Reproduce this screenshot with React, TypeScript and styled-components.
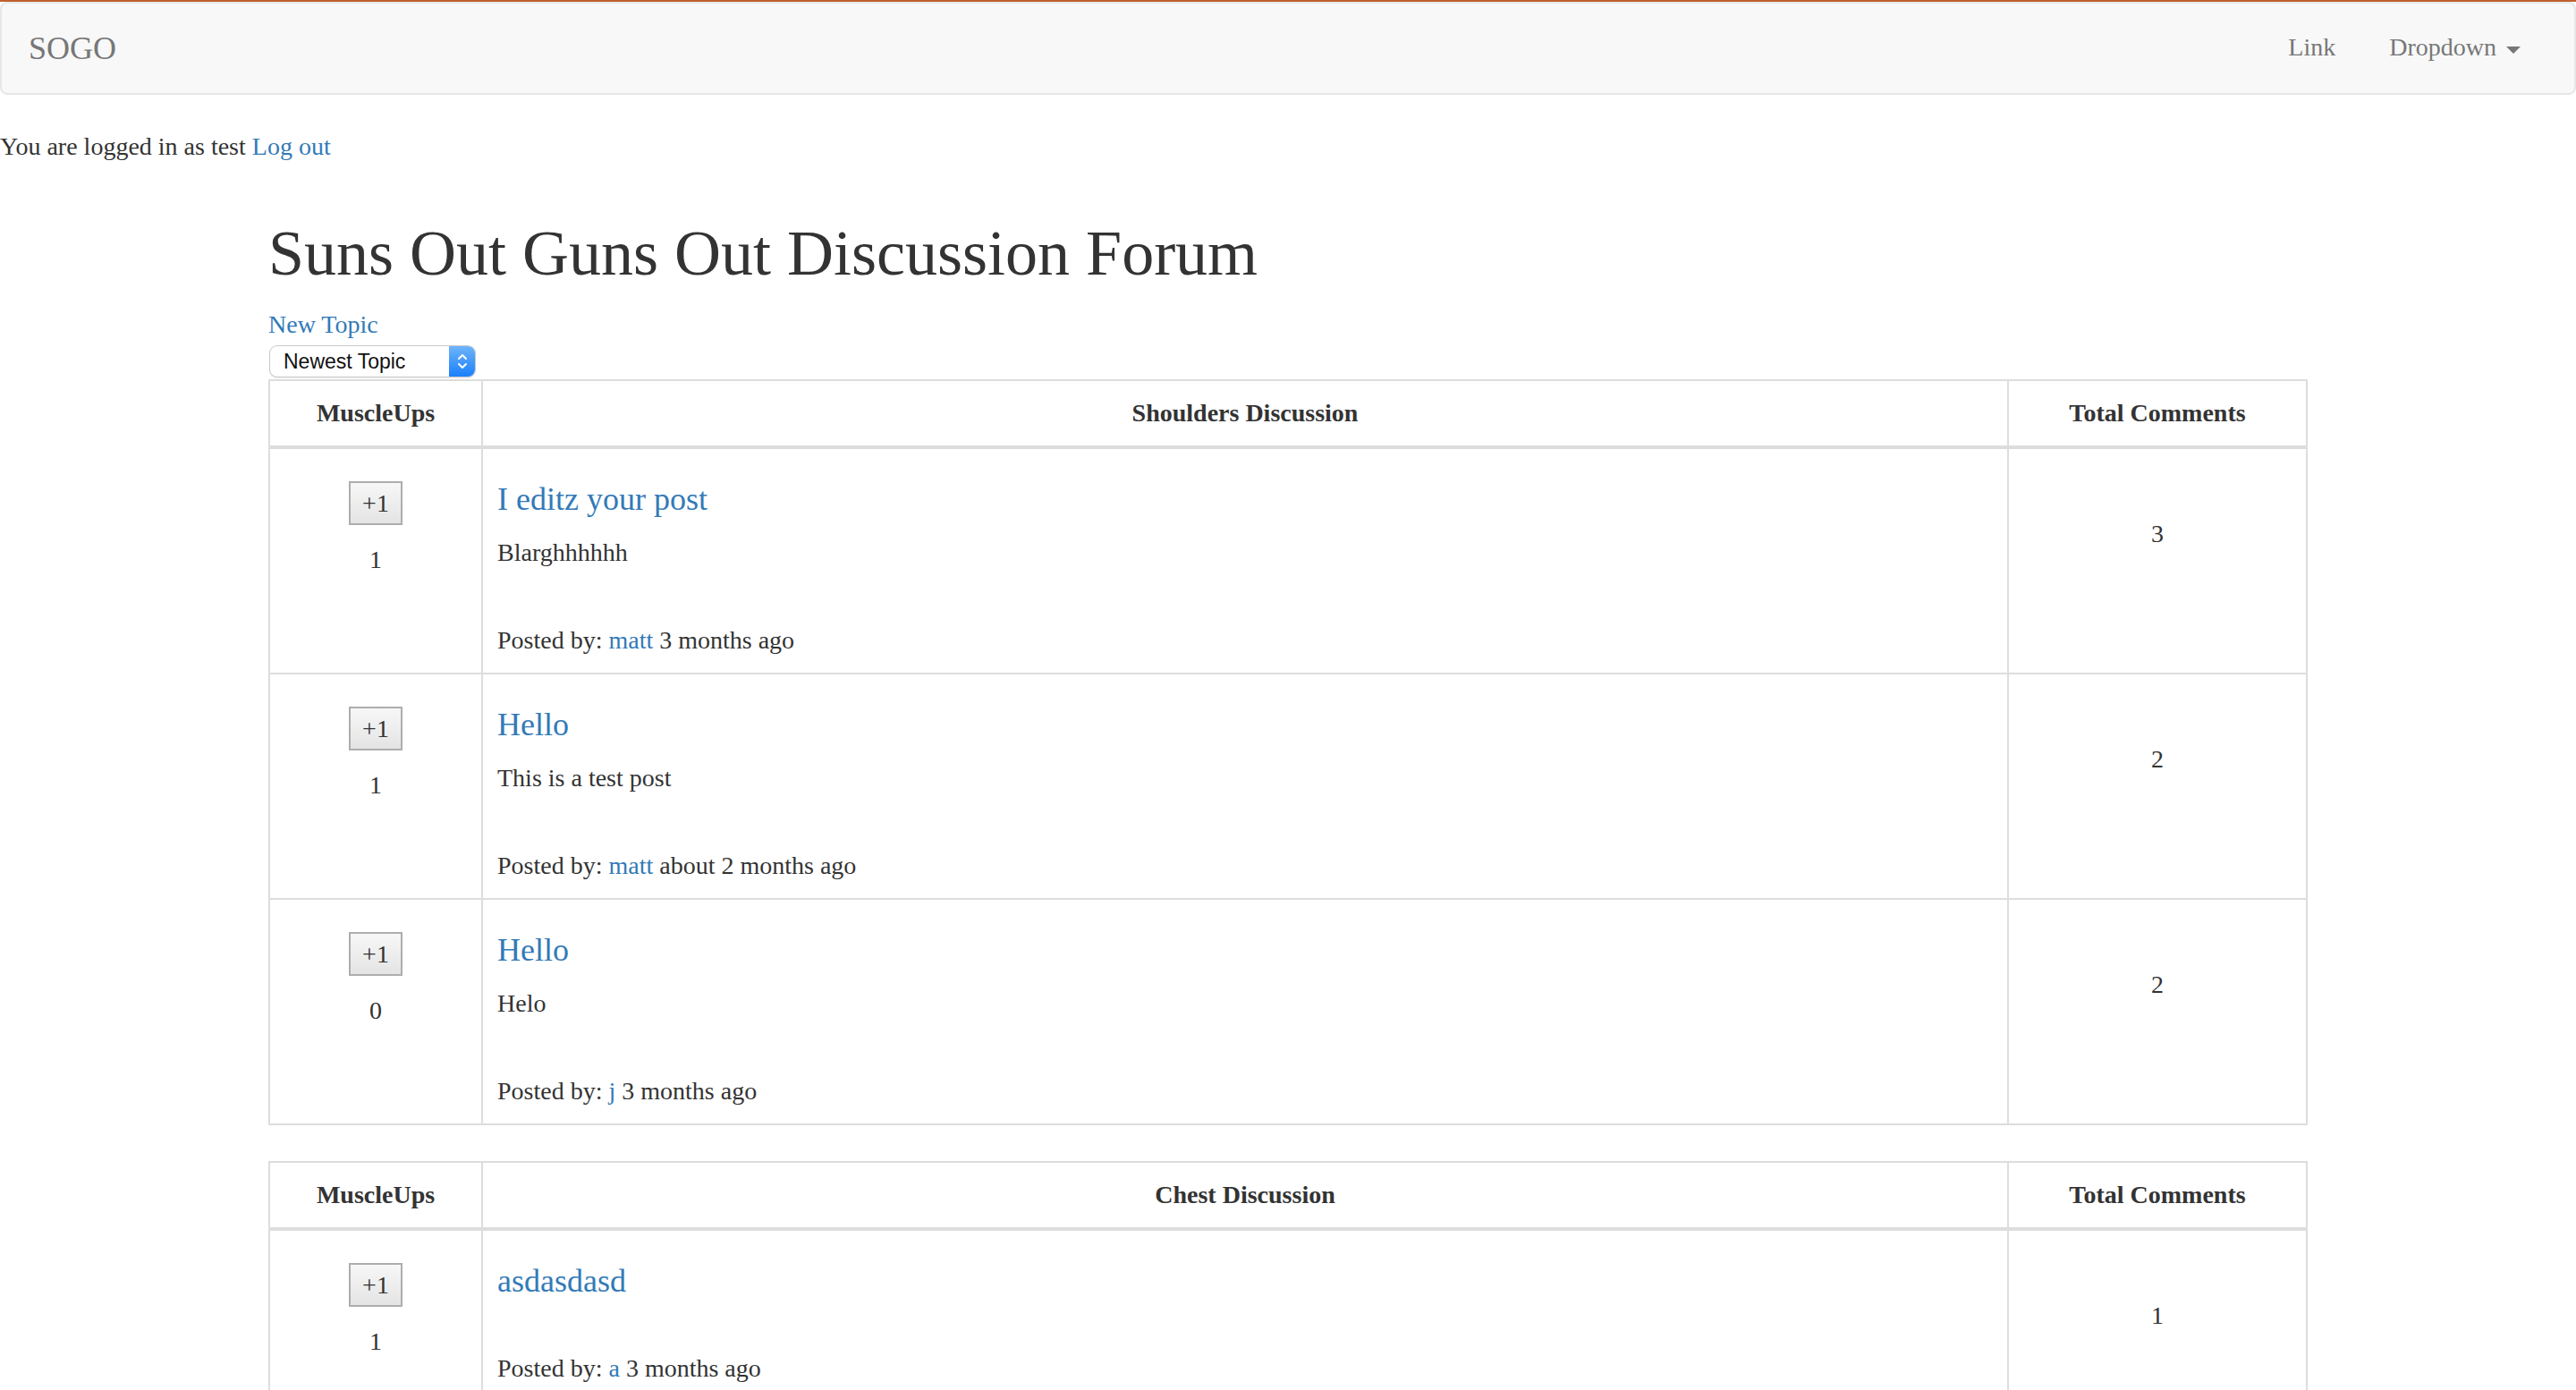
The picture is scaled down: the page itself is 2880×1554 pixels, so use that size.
import React from "react";
import styled, { createGlobalStyle } from "styled-components";

const GlobalStyle = createGlobalStyle`
  html, body { margin: 0; padding: 0; background: #fff; }
  body {
    font-family: "Liberation Serif", "Times New Roman", Times, serif;
    font-size: 28px;
    line-height: 40px;
    color: #333;
  }
  * { box-sizing: border-box; }
`;

const TopStripe = styled.div`
  height: 2px;
  background: #c0602d;
`;

const Navbar = styled.nav`
  display: flex;
  justify-content: space-between;
  height: 104px;
  padding: 0 30px;
  background: #f8f8f8;
  border: 2px solid #e7e7e7;
  border-radius: 8px;
  margin-bottom: 38px;
`;

const Brand = styled.a`
  font-size: 36px;
  line-height: 40px;
  padding: 30px 30px 30px 0;
  color: #777;
  text-decoration: none;
`;

const NavList = styled.ul`
  display: flex;
  margin: 0;
  padding: 0;
  list-style: none;
`;

const NavLink = styled.a`
  display: block;
  padding: 29px 30px 31px;
  line-height: 40px;
  color: #777;
  text-decoration: none;
`;

const Caret = styled.span`
  display: inline-block;
  width: 0;
  height: 0;
  margin-left: 4px;
  vertical-align: middle;
  border-top: 8px solid #777;
  border-left: 8px solid transparent;
  border-right: 8px solid transparent;
`;

const Link = styled.a`
  color: #337ab7;
  text-decoration: none;
`;

const LoginLine = styled.p`
  margin: 0 0 20px;
`;

const Container = styled.div`
  max-width: 2340px;
  margin: 0 auto;
  padding: 0 30px;
`;

const Title = styled.h1`
  font-size: 72px;
  line-height: 79px;
  font-weight: 500;
  margin: 60px 0 20px;
`;

const NewTopic = styled(Link)`
  display: block;
`;

const SelectBox = styled.div`
  display: flex;
  width: 229px;
  height: 34px;
  margin: 4px 0 3px 2px;
  border-radius: 8px;
  background: #fff;
  box-shadow: 0 0 0 1px #c9c9c9, 0 1px 2px rgba(0, 0, 0, 0.25);
  font-family: "Liberation Sans", Arial, sans-serif;
  font-size: 23px;
  line-height: 34px;
  color: #111;
  overflow: hidden;
`;

const SelectLabel = styled.span`
  flex: 1;
  padding-left: 15px;
`;

const SelectArrow = styled.span`
  width: 29px;
  display: flex;
  align-items: center;
  justify-content: center;
  background: linear-gradient(#6db4fb, #1a7ffb);
`;

const Table = styled.table`
  width: 100%;
  border-collapse: collapse;
  table-layout: fixed;
  border: 2px solid #ddd;
  margin-bottom: 40px;
`;

const Th = styled.th`
  padding: 16px;
  border: 2px solid #ddd;
  border-bottom-width: 4px;
  text-align: center;
  font-weight: 700;
  line-height: 40px;
`;

const Td = styled.td<{ $center?: boolean }>`
  padding: 16px;
  border: 2px solid #ddd;
  vertical-align: top;
  text-align: ${(p) => (p.$center ? "center" : "left")};
`;

const VoteButton = styled.button`
  display: block;
  width: 60px;
  height: 49px;
  margin: 20px auto 0;
  padding: 0;
  border: 2px solid #adadad;
  background: linear-gradient(#f7f7f7, #e4e4e4);
  font-family: "Liberation Serif", "Times New Roman", serif;
  font-size: 28px;
  color: #333;
`;

const VoteCount = styled.div`
  margin-top: 19px;
`;

const PostTitle = styled.h4`
  font-size: 36px;
  line-height: 40px;
  font-weight: 500;
  margin: 20px 0;
`;

const PostBody = styled.p`
  margin: 0 0 20px;
`;

const Spacer = styled.div`
  height: 38px;
`;

const Posted = styled.div``;

const CommentCount = styled.div`
  margin-top: 59px;
`;

type Post = { title: string; body?: string; user: string; ago: string; votes: number; comments: number };

const sections: { name: string; posts: Post[] }[] = [
  {
    name: "Shoulders Discussion",
    posts: [
      { title: "I editz your post", body: "Blarghhhhhh", user: "matt", ago: "3 months ago", votes: 1, comments: 3 },
      { title: "Hello", body: "This is a test post", user: "matt", ago: "about 2 months ago", votes: 1, comments: 2 },
      { title: "Hello", body: "Helo", user: "j", ago: "3 months ago", votes: 0, comments: 2 },
    ],
  },
  {
    name: "Chest Discussion",
    posts: [{ title: "asdasdasd", user: "a", ago: "3 months ago", votes: 1, comments: 1 }],
  },
];

const Chevrons = () => (
  <svg width="14" height="22" viewBox="0 0 14 22">
    <path d="M3 8 L7 4 L11 8 M3 14 L7 18 L11 14" fill="none" stroke="#fff" strokeWidth="2" strokeLinecap="round" strokeLinejoin="round" />
  </svg>
);

export default function App() {
  return (
    <>
      <GlobalStyle />
      <TopStripe />
      <Navbar>
        <Brand href="#">SOGO</Brand>
        <NavList>
          <li><NavLink href="#">Link</NavLink></li>
          <li><NavLink href="#">Dropdown <Caret /></NavLink></li>
        </NavList>
      </Navbar>
      <LoginLine>
        You are logged in as test <Link href="#">Log out</Link>
      </LoginLine>
      <Container>
        <Title>Suns Out Guns Out Discussion Forum</Title>
        <NewTopic href="#">New Topic</NewTopic>
        <SelectBox>
          <SelectLabel>Newest Topic</SelectLabel>
          <SelectArrow><Chevrons /></SelectArrow>
        </SelectBox>
        {sections.map((s) => (
          <Table key={s.name}>
            <colgroup>
              <col style={{ width: 238 }} />
              <col />
              <col style={{ width: 334 }} />
            </colgroup>
            <thead>
              <tr>
                <Th>MuscleUps</Th>
                <Th>{s.name}</Th>
                <Th>Total Comments</Th>
              </tr>
            </thead>
            <tbody>
              {s.posts.map((p, i) => (
                <tr key={i}>
                  <Td $center>
                    <VoteButton>+1</VoteButton>
                    <VoteCount>{p.votes}</VoteCount>
                  </Td>
                  <Td>
                    <PostTitle><Link href="#">{p.title}</Link></PostTitle>
                    {p.body && <PostBody>{p.body}</PostBody>}
                    <Spacer />
                    <Posted>
                      Posted by: <Link href="#">{p.user}</Link> {p.ago}
                    </Posted>
                  </Td>
                  <Td $center>
                    <CommentCount>{p.comments}</CommentCount>
                  </Td>
                </tr>
              ))}
            </tbody>
          </Table>
        ))}
      </Container>
    </>
  );
}
